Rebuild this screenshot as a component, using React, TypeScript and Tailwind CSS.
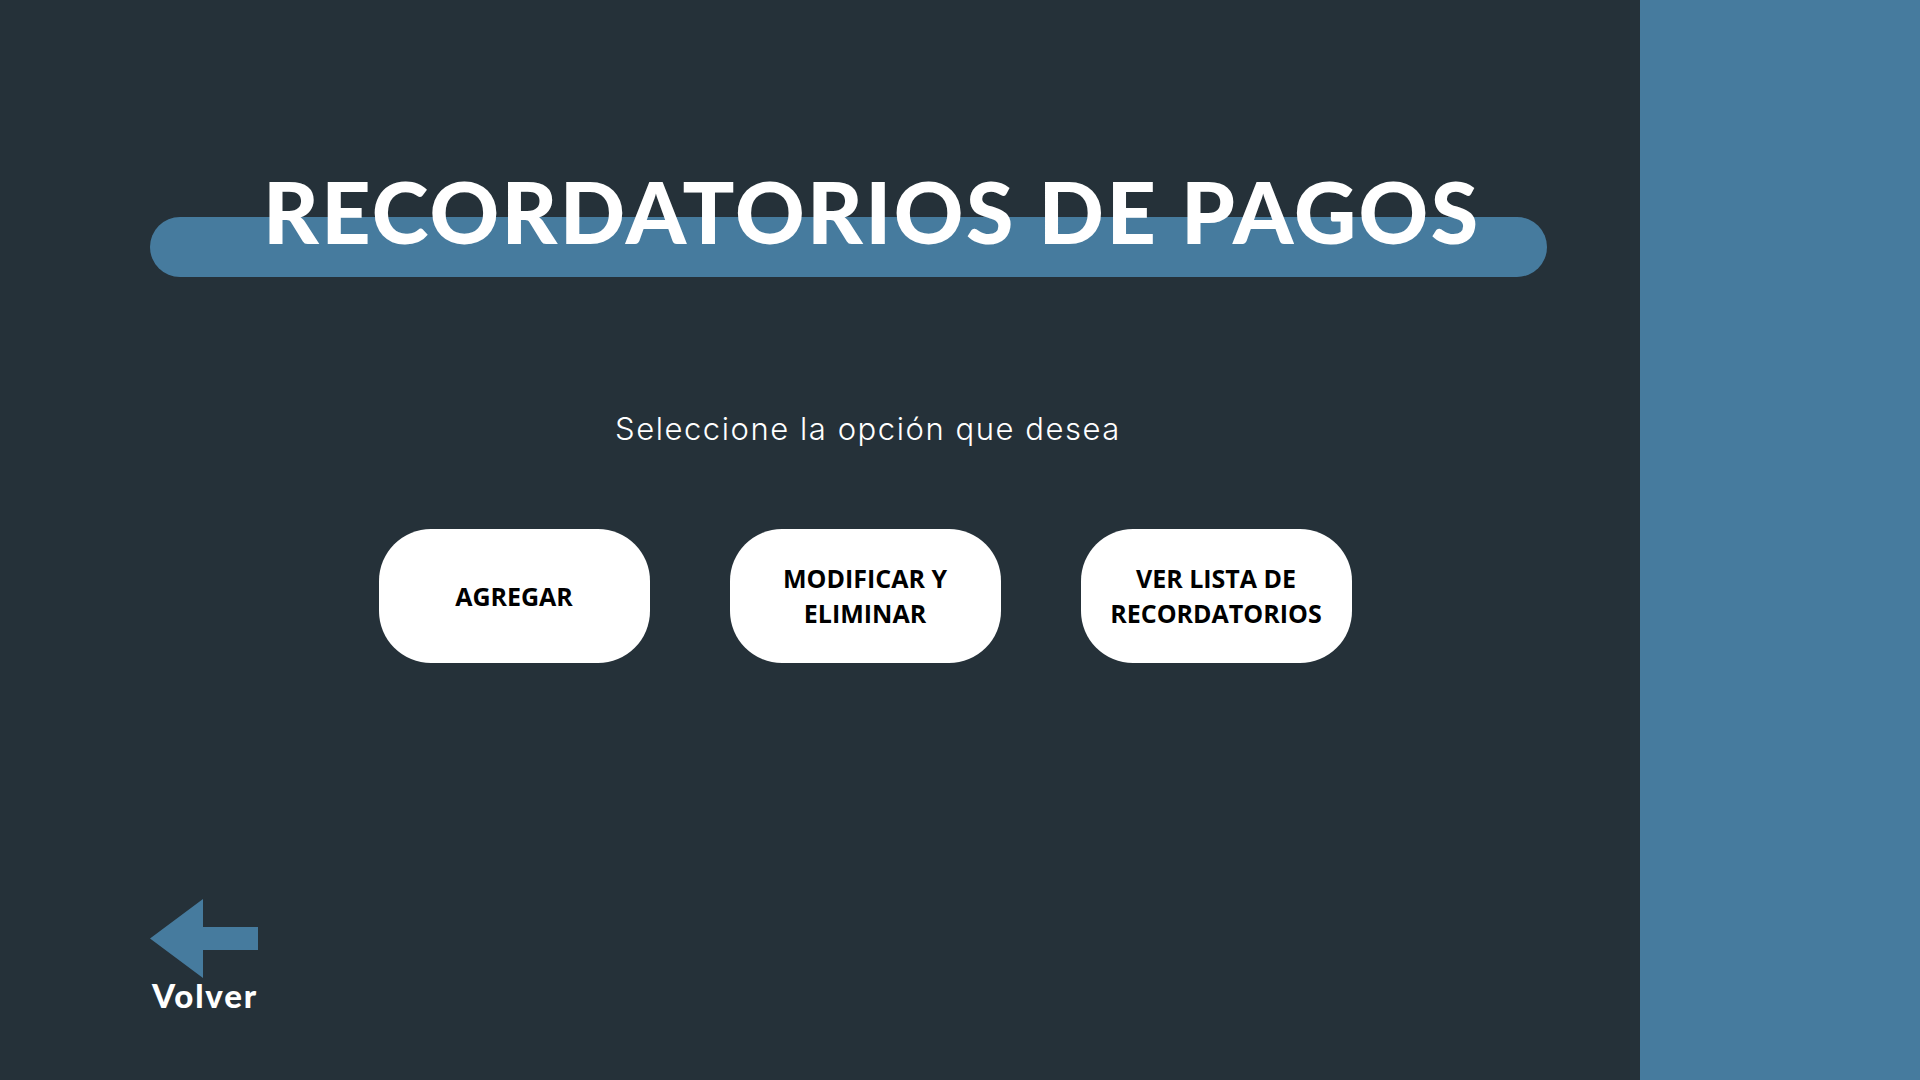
import React from 'react';

const options = [
  { id: 'add', lines: ['AGREGAR'] },
  { id: 'edit', lines: ['MODIFICAR Y', 'ELIMINAR'] },
  { id: 'list', lines: ['VER LISTA DE', 'RECORDATORIOS'] },
];

export default function App() {
  return (
    <div className="flex h-[1080px] w-full overflow-hidden bg-[#253139]">
      <main className="flex w-[1640px] shrink-0 flex-col pl-[150px]">
        {/* titulo con barra detras */}
        <div className="flex w-[1397px] flex-col pt-[168px]">
          <h1 className="relative z-10 pl-[113px] text-[86px] font-black uppercase leading-none tracking-[0.028em] text-white whitespace-nowrap [font-family:Lato,'Open_Sans',sans-serif]">
            Recordatorios de pagos
          </h1>
          <div className="-mt-[37px] h-[60px] w-full rounded-full bg-[#467b9e]"></div>
        </div>

        <div className="flex w-[1430px] flex-col items-center">
          <p className="ml-[6px] mt-[134px] text-[31px] font-light leading-[36px] tracking-[1.55px] text-white [font-family:Inter,sans-serif]">
            Seleccione la opción que desea
          </p>

          <div className="mt-[82px] flex gap-[80px]">
            {options.map((o) => (
              <button
                key={o.id}
                className="flex h-[134px] w-[271px] flex-col items-center justify-center rounded-[52px] bg-white text-[25px] font-bold leading-[35px] text-black [font-family:'Open_Sans',sans-serif]"
              >
                {o.lines.map((l) => (
                  <span key={l}>{l}</span>
                ))}
              </button>
            ))}
          </div>
        </div>

        {/* volver */}
        <button className="mt-[236px] flex w-fit flex-col items-start">
          <svg width="108" height="79" viewBox="0 0 108 79">
            <polygon points="0,39.5 53,0 53,28 108,28 108,51 53,51 53,79" fill="#467b9e" />
          </svg>
          <span className="mt-[1px] pl-[2px] text-[33px] font-black leading-none tracking-[1.8px] text-white [font-family:Lato,sans-serif]">
            Volver
          </span>
        </button>
      </main>
      <aside className="flex-1 bg-[#467b9e]"></aside>
    </div>
  );
}
